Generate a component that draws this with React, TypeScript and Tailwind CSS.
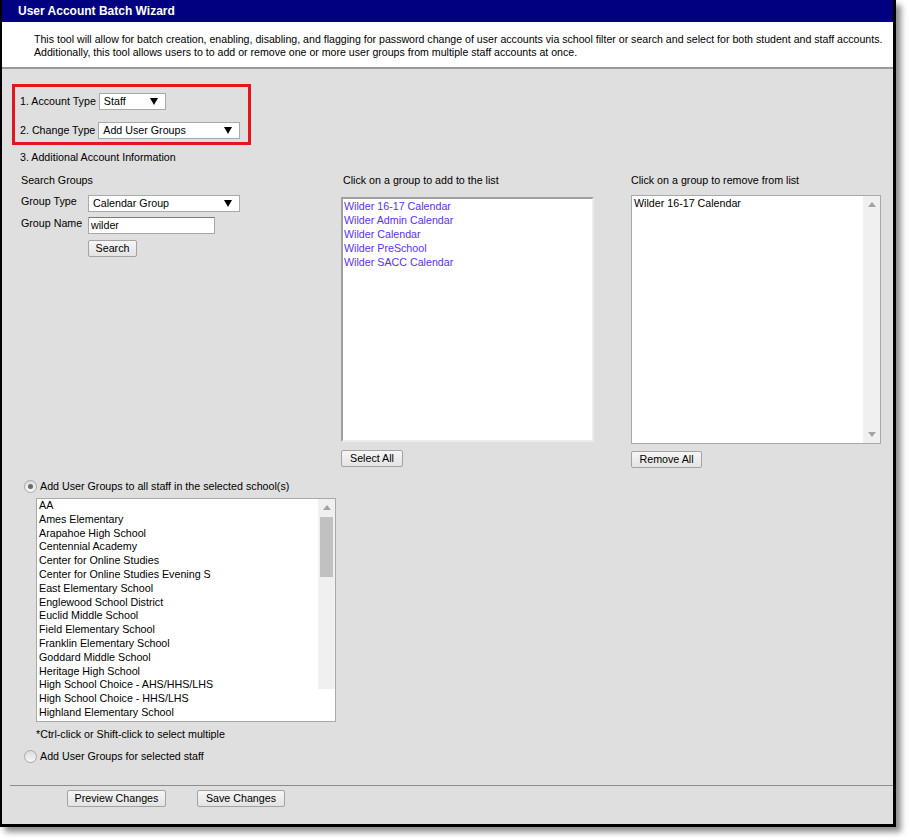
import React from "react";

const SCHOOLS = [
  "AA",
  "Ames Elementary",
  "Arapahoe High School",
  "Centennial Academy",
  "Center for Online Studies",
  "Center for Online Studies Evening S",
  "East Elementary School",
  "Englewood School District",
  "Euclid Middle School",
  "Field Elementary School",
  "Franklin Elementary School",
  "Goddard Middle School",
  "Heritage High School",
  "High School Choice - AHS/HHS/LHS",
  "High School Choice - HHS/LHS",
  "Highland Elementary School",
];

const FOUND_GROUPS = [
  "Wilder 16-17 Calendar",
  "Wilder Admin Calendar",
  "Wilder Calendar",
  "Wilder PreSchool",
  "Wilder SACC Calendar",
];

function Caret() {
  return (
    <svg width="8" height="7" viewBox="0 0 8 7" className="shrink-0">
      <path d="M0 0 L8 0 L4 7 Z" fill="#000" />
    </svg>
  );
}

function Select({ value, width }: { value: string; width: string }) {
  return (
    <div
      className={`${width} h-[17px] flex items-center justify-between bg-white border border-[#a9a9a9] pl-[4px] pr-[7px] leading-none`}
    >
      <span>{value}</span>
      <Caret />
    </div>
  );
}

function Button({ label, width }: { label: string; width: string }) {
  return (
    <button
      className={`${width} h-[17px] flex items-center justify-center border border-[#a3a3a3] rounded-[2px] bg-gradient-to-b from-[#f6f6f6] to-[#e3e3e3] text-[10.7px] leading-none text-black`}
    >
      {label}
    </button>
  );
}

function Radio({ checked }: { checked?: boolean }) {
  return (
    <span className="w-[13px] h-[13px] rounded-full border border-[#a8a8a8] bg-gradient-to-b from-[#dcdcdc] to-[#f7f7f7] flex items-center justify-center shrink-0">
      {checked && <span className="w-[5px] h-[5px] rounded-full bg-[#6b6b6b]" />}
    </span>
  );
}

function ArrowUp() {
  return (
    <svg width="8" height="5" viewBox="0 0 8 5">
      <path d="M0 5 L4 0 L8 5 Z" fill="#a3a3a3" />
    </svg>
  );
}

function ArrowDown() {
  return (
    <svg width="8" height="5" viewBox="0 0 8 5">
      <path d="M0 0 L8 0 L4 5 Z" fill="#a3a3a3" />
    </svg>
  );
}

export default function App() {
  return (
    <div className="min-h-screen bg-white font-['Liberation_Sans',Arial,sans-serif] text-[10.7px] text-black">
      <div className="w-[896px] h-[827px] flex flex-col border-l-2 border-r-[3px] border-b-[3px] border-black bg-[#dfdfdf] shadow-[5px_5px_6px_rgba(0,0,0,0.45)]">
        {/* header */}
        <div className="h-[22px] bg-[#000080] flex items-center pl-[16px] text-white font-bold text-[12px]">
          User Account Batch Wizard
        </div>
        <div className="h-[47px] bg-white border-b-2 border-[#9a9a9a] pl-[32px] pt-[11px] leading-[13px] text-[10.6px] whitespace-nowrap">
          <p>
            This tool will allow for batch creation, enabling, disabling, and flagging for password change of user accounts via school filter or search and select for both student and staff accounts.
          </p>
          <p>Additionally, this tool allows users to to add or remove one or more user groups from multiple staff accounts at once.</p>
        </div>

        {/* body */}
        <div className="flex-1 flex flex-col">
          <div className="ml-[10px] mt-[15px] w-[239px] h-[61px] border-[3px] border-[#e8141b] pl-[5px] pt-[6px] flex flex-col gap-[12px]">
            <div className="flex items-center gap-[3px]">
              <span>1. Account Type</span>
              <Select value="Staff" width="w-[67px]" />
            </div>
            <div className="flex items-center gap-[3px]">
              <span>2. Change Type</span>
              <Select value="Add User Groups" width="w-[142px]" />
            </div>
          </div>

          <div className="ml-[18px] mt-[6px] leading-[13px]">3. Additional Account Information</div>

          <div className="mt-[10px] flex">
            {/* search */}
            <div className="w-[339px] pl-[19px] flex flex-col">
              <div className="leading-[13px]">Search Groups</div>
              <div className="mt-[8px] flex items-start">
                <span className="w-[67px] leading-[13px]">Group Type</span>
                <Select value="Calendar Group" width="w-[152px]" />
              </div>
              <div className="mt-[5px] flex items-start">
                <span className="w-[67px] leading-[13px]">Group Name</span>
                <div className="w-[127px] h-[17px] bg-white border border-[#a9a9a9] border-t-[#7a7a7a] pl-[2px] flex items-center">
                  wilder
                </div>
              </div>
              <div className="mt-[6px] ml-[67px]">
                <Button label="Search" width="w-[49px]" />
              </div>
            </div>

            {/* add list */}
            <div className="w-[290px] flex flex-col">
              <div className="ml-[2px] leading-[13px]">Click on a group to add to the list</div>
              <div className="mt-[10px] w-[253px] h-[245px] bg-white border-2 border-[#a0a0a0] border-r-[#ececec] border-b-[#ececec] pl-[1px] leading-[14px] text-[#5a32f2]">
                {FOUND_GROUPS.map((g) => (
                  <div key={g}>{g}</div>
                ))}
              </div>
              <div className="mt-[8px]">
                <Button label="Select All" width="w-[62px]" />
              </div>
            </div>

            {/* remove list */}
            <div className="flex flex-col">
              <div className="leading-[13px]">Click on a group to remove from list</div>
              <div className="mt-[8px] w-[250px] h-[249px] bg-white border border-[#a9a9a9] flex">
                <div className="flex-1 pl-[2px] leading-[14px]">Wilder 16-17 Calendar</div>
                <div className="w-[17px] bg-[#f0f0f0] flex flex-col items-center justify-between py-[6px]">
                  <ArrowUp />
                  <ArrowDown />
                </div>
              </div>
              <div className="mt-[7px]">
                <Button label="Remove All" width="w-[71px]" />
              </div>
            </div>
          </div>

          {/* schools */}
          <div className="mt-[12px] ml-[22px] flex items-center gap-[3px] leading-[13px]">
            <Radio checked />
            <span>Add User Groups to all staff in the selected school(s)</span>
          </div>
          <div className="mt-[5px] ml-[34px] w-[300px] h-[224px] bg-white border border-[#a9a9a9] flex">
            <div className="flex-1 pl-[2px] leading-[13.8px]">
              {SCHOOLS.map((s) => (
                <div key={s}>{s}</div>
              ))}
            </div>
            <div className="w-[17px] h-[190px] bg-[#f0f0f0] flex flex-col items-center pt-[6px]">
              <ArrowUp />
              <div className="mt-[7px] w-[13px] h-[60px] bg-[#c1c1c1]" />
            </div>
          </div>
          <div className="mt-[6px] ml-[34px] leading-[13px]">*Ctrl-click or Shift-click to select multiple</div>
          <div className="mt-[9px] ml-[22px] flex items-center gap-[3px] leading-[13px]">
            <Radio />
            <span>Add User Groups for selected staff</span>
          </div>

          {/* footer */}
          <div className="mt-auto ml-[8px] h-[39px] border-t border-[#8c8c8c] pt-[4px] pl-[57px] flex items-start gap-[31px]">
            <Button label="Preview Changes" width="w-[99px]" />
            <Button label="Save Changes" width="w-[88px]" />
          </div>
        </div>
      </div>
    </div>
  );
}
